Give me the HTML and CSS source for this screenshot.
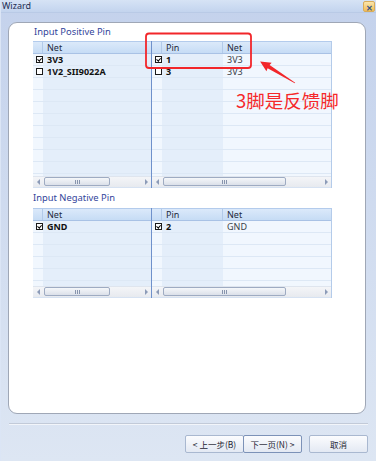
FILE: index.html
```html
<!DOCTYPE html>
<html lang="zh">
<head>
    <meta charset="UTF-8">
    <title>Wizard</title>
    <link rel="stylesheet" href="styles.css">
</head>
<body>

<div class="window">
    <div class="titlebar">
        <span class="title">Wizard</span>
        <span class="close">&#x2715;</span>
    </div>

    <div class="client">
        <div class="panel">

            <div class="group-label">Input Positive Pin</div>
            <div class="tables">
                <div class="grid grid-net">
                    <div class="head">
                        <span class="hcell hcell-check"></span>
                        <span class="hcell">Net</span>
                    </div>
                    <div class="body body-net body-tall">
                        <div class="row"><span class="cb checked"></span><b>3V3</b></div>
                        <div class="row"><span class="cb"></span><b>1V2_SII9022A</b></div>
                        <div class="row"></div><div class="row"></div><div class="row"></div>
                        <div class="row"></div><div class="row"></div><div class="row"></div>
                        <div class="row"></div><div class="row"></div><div class="row"></div>
                    </div>
                    <div class="scrollbar">
                        <span class="arrow arrow-left"></span>
                        <span class="track"><span class="thumb" style="width: 66px"><span class="grip"></span></span></span>
                        <span class="arrow arrow-right"></span>
                    </div>
                </div>
                <div class="grid grid-pin">
                    <div class="head">
                        <span class="hcell hcell-check"></span>
                        <span class="hcell hcell-pin">Pin</span>
                        <span class="hcell">Net</span>
                    </div>
                    <div class="body body-pin body-tall">
                        <div class="row"><span class="pin"><span class="cb checked"></span><b>1</b></span><span class="net">3V3</span></div>
                        <div class="row"><span class="pin"><span class="cb"></span><b>3</b></span><span class="net">3V3</span></div>
                        <div class="row"></div><div class="row"></div><div class="row"></div>
                        <div class="row"></div><div class="row"></div><div class="row"></div>
                        <div class="row"></div><div class="row"></div><div class="row"></div>
                    </div>
                    <div class="scrollbar">
                        <span class="arrow arrow-left"></span>
                        <span class="track"><span class="thumb" style="width: 123px"><span class="grip"></span></span></span>
                        <span class="arrow arrow-right"></span>
                    </div>
                </div>
            </div>

            <div class="group-label group-label-second">Input Negative Pin</div>
            <div class="tables">
                <div class="grid grid-net">
                    <div class="head">
                        <span class="hcell hcell-check"></span>
                        <span class="hcell">Net</span>
                    </div>
                    <div class="body body-net body-short">
                        <div class="row"><span class="cb checked"></span><b>GND</b></div>
                        <div class="row"></div><div class="row"></div><div class="row"></div>
                        <div class="row"></div><div class="row"></div>
                    </div>
                    <div class="scrollbar">
                        <span class="arrow arrow-left"></span>
                        <span class="track"><span class="thumb" style="width: 66px"><span class="grip"></span></span></span>
                        <span class="arrow arrow-right"></span>
                    </div>
                </div>
                <div class="grid grid-pin">
                    <div class="head">
                        <span class="hcell hcell-check"></span>
                        <span class="hcell hcell-pin">Pin</span>
                        <span class="hcell">Net</span>
                    </div>
                    <div class="body body-pin body-short">
                        <div class="row"><span class="pin"><span class="cb checked"></span><b>2</b></span><span class="net">GND</span></div>
                        <div class="row"></div><div class="row"></div><div class="row"></div>
                        <div class="row"></div><div class="row"></div>
                    </div>
                    <div class="scrollbar">
                        <span class="arrow arrow-left"></span>
                        <span class="track"><span class="thumb" style="width: 123px"><span class="grip"></span></span></span>
                        <span class="arrow arrow-right"></span>
                    </div>
                </div>
            </div>

        </div>

        <div class="separator"></div>

        <div class="buttons">
            <button class="btn">&lt; 上一步(<u>B</u>)</button>
            <button class="btn btn-default">下一页(<u>N</u>) &gt;</button>
            <button class="btn btn-cancel">取消</button>
        </div>
    </div>

    <!-- red annotation drawn over the screenshot -->
    <svg class="annot" width="376" height="461" viewBox="0 0 376 461">
        <rect x="146" y="33.5" width="105" height="34.5" rx="3" fill="none" stroke="#f2262a" stroke-width="1.8"/>
        <g transform="translate(295 83) rotate(211.7)">
            <polygon points="0,0.4 31,1.9 30.5,5 41,0 30.5,-5 31,-1.9 0,-0.4" fill="#f2262a"/>
        </g>
    </svg>
    <div class="annot-text">3脚是反馈脚</div>
</div>

</body>
</html>
```

FILE: styles.css
```css
body {
    margin: 0;
    width: 376px;
    height: 461px;
    overflow: hidden;
    font-family: "Noto Sans", "Noto Sans CJK SC", sans-serif;
    font-size: 9px;
}
.window {
    position: relative;
    height: 461px;
    display: flex;
    flex-direction: column;
    background: linear-gradient(#c4d2ec, #dde6f3);
    border-left: 1px solid #dbe5f5;
    box-sizing: border-box;
}
.titlebar {
    height: 13px;
    display: flex;
    align-items: center;
    justify-content: space-between;
    padding: 0 1px 0 1px;
    background: linear-gradient(#d6e3f5, #c3d4ee);
    border-bottom: 1px solid #b9cae6;
    box-sizing: border-box;
}
.title {
    color: #1c2d52;
    font-size: 9px;
    line-height: 12px;
}
.close {
    width: 12px;
    height: 11px;
    line-height: 11px;
    text-align: center;
    font-size: 8px;
    font-weight: bold;
    color: #35558a;
    background: linear-gradient(#fbe6ac, #f1bc55);
    border: 1px solid #d8ac5a;
    border-radius: 2px;
    box-sizing: border-box;
}
.client {
    flex: 1;
    display: flex;
    flex-direction: column;
    padding: 9px 8px 0 7px;
}
.panel {
    height: 392px;
    box-sizing: border-box;
    background: #fff;
    border: 1px solid #9fa7b6;
    border-radius: 9px;
    margin-right: 2px;
    padding: 3px 0 0 24px;
}
.group-label {
    color: #33459b;
    font-size: 9.4px;
    line-height: 12px;
    margin: 0 0 3px 1px;
}
.group-label-second {
    margin: 4px 0 4px 0;
}
.tables {
    display: flex;
    width: 299px;
}
.grid {
    display: flex;
    flex-direction: column;
    box-sizing: border-box;
}
.grid-net {
    width: 119px;
    border-right: 1px solid #6f91cb;
}
.grid-pin {
    width: 180px;
    border-right: 1px solid #b4cbea;
}
.head {
    height: 13px;
    display: flex;
    box-sizing: border-box;
    background: linear-gradient(#dbe9fa, #c6dcf5);
    border-top: 1px solid #b3cbec;
    border-bottom: 1px solid #a9c2e5;
    color: #1f2b40;
}
.hcell {
    flex: 1;
    padding-left: 4px;
    line-height: 11px;
    border-left: 1px solid #b2cae9;
}
.hcell-check {
    flex: none;
    width: 9px;
    padding: 0;
    border-left: none;
}
.hcell-pin {
    flex: none;
    width: 56px;
}
.body {
    overflow: hidden;
}
.body-tall {
    height: 122px;
}
.body-short {
    height: 65px;
}
.body-net {
    background: linear-gradient(to right, #f1f7fe 0 10px, #e4eefa 10px);
}
.body-pin {
    background: linear-gradient(to right, #f1f7fe 0 10px, #e4eefa 10px 71px, #f1f7fe 71px);
}
.row {
    height: 12px;
    display: flex;
    align-items: center;
    box-sizing: border-box;
    border-bottom: 1px solid #dde8f5;
    padding-left: 3px;
    color: #111;
}
.row b {
    margin-left: 4px;
    line-height: 11px;
}
.pin {
    width: 68px;
    display: flex;
    align-items: center;
}
.net {
    padding-left: 4px;
    color: #3a3f48;
    line-height: 11px;
}
.cb {
    width: 7px;
    height: 7px;
    border: 1px solid #1a1a1a;
    box-sizing: border-box;
    background: #fff;
    position: relative;
}
.cb.checked::after {
    content: "";
    position: absolute;
    left: 1.2px;
    top: -0.5px;
    width: 1.6px;
    height: 3.4px;
    border-right: 1.2px solid #000;
    border-bottom: 1.2px solid #000;
    transform: rotate(40deg);
}
.scrollbar {
    height: 12px;
    display: flex;
    align-items: center;
    box-sizing: border-box;
    background: linear-gradient(#f4f5f8, #e7eaef);
    border-top: 1px solid #dfe5ee;
    border-bottom: 1px solid #d6e2f2;
}
.arrow {
    width: 10px;
    height: 10px;
    display: flex;
    align-items: center;
    justify-content: center;
}
.arrow::before {
    content: "";
    border-top: 3.5px solid transparent;
    border-bottom: 3.5px solid transparent;
}
.arrow-left::before {
    border-right: 3.5px solid #8c9bb8;
}
.arrow-right::before {
    border-left: 3.5px solid #8c9bb8;
}
.track {
    flex: 1;
    height: 10px;
    display: flex;
}
.thumb {
    height: 9px;
    margin-left: 1px;
    box-sizing: border-box;
    border: 1px solid #9eabc2;
    border-radius: 2px;
    background: linear-gradient(#f5f7fa, #dbe0e9);
    display: flex;
    align-items: center;
    justify-content: center;
}
.grip {
    width: 5px;
    height: 4px;
    background: repeating-linear-gradient(to right, #8794ad 0 1px, transparent 1px 2px);
}
.separator {
    height: 1px;
    margin: 9px 0 0 1px;
    background: #c2cad8;
    border-bottom: 1px solid #f2f5fa;
}
.buttons {
    display: flex;
    justify-content: flex-end;
    margin-top: 10px;
}
.btn {
    width: 59px;
    height: 18px;
    padding: 0;
    font-family: "Noto Sans CJK SC", "Noto Sans", sans-serif;
    font-size: 8.5px;
    color: #1e2533;
    background: linear-gradient(#fbfcfe, #e3e9f3);
    border: 1px solid #a9b8d0;
    border-radius: 2px;
}
.btn u {
    text-decoration: none;
}
.btn-default {
    border-color: #7c92b8;
    margin-left: -1px;
}
.btn-cancel {
    margin-left: 7px;
}
.annot {
    position: absolute;
    left: -1px;
    top: 0;
    pointer-events: none;
}
.annot-text {
    position: absolute;
    left: 235px;
    top: 91px;
    font-family: "Noto Sans CJK SC", sans-serif;
    font-size: 18.5px;
    line-height: 19px;
    color: #f5292b;
}
```
